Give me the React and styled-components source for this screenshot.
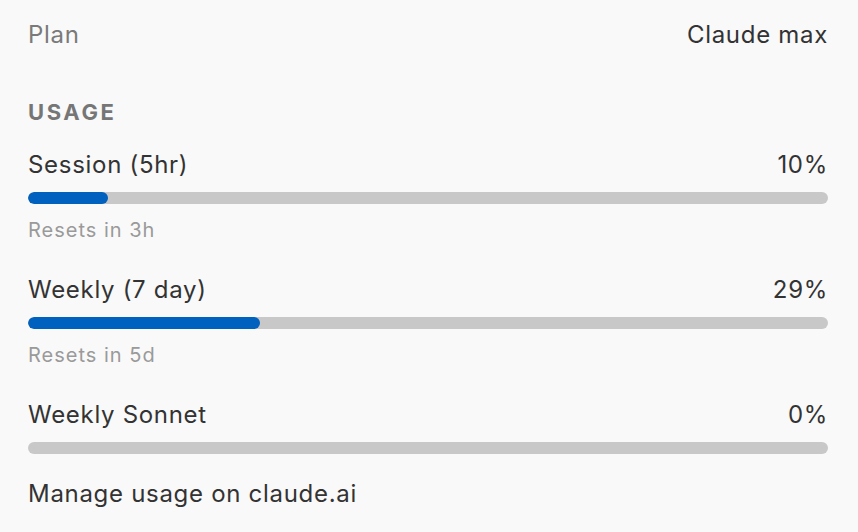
import React from "react";
import styled, { createGlobalStyle } from "styled-components";

const Global = createGlobalStyle`
  html, body { margin: 0; padding: 0; background: #f9f9f9; }
  body { font-family: Inter, "Noto Sans", sans-serif; -webkit-font-smoothing: antialiased; }
`;

const Panel = styled.div`
  width: 858px;
  height: 532px;
  box-sizing: border-box;
  padding: 20px 30px 0 28px;
  background: #f9f9f9;
  display: flex;
  flex-direction: column;
`;

const Row = styled.div`
  display: flex;
  justify-content: space-between;
  align-items: center;
  height: 30px;
  font-size: 24px;
  line-height: 30px;
  letter-spacing: 0.7px;
  color: #333333;
`;

const Muted = styled.span`
  color: #7a7a7a;
`;

const Section = styled.div`
  margin-top: 47px;
  font-size: 22px;
  line-height: 30px;
  font-weight: 700;
  letter-spacing: 2.6px;
  color: #767676;
`;

const Metrics = styled.div`
  display: flex;
  flex-direction: column;
  gap: 32px;
  margin-top: 23px;
`;

const Metric = styled.div`
  display: flex;
  flex-direction: column;
`;

const Track = styled.div`
  margin-top: 12px;
  height: 12px;
  border-radius: 6px;
  background: #c8c8c8;
  overflow: hidden;
`;

const Fill = styled.div`
  height: 100%;
  border-radius: 6px;
  background: #0061bf;
`;

const Reset = styled.div`
  margin-top: 13px;
  font-size: 20px;
  line-height: 26px;
  letter-spacing: 1px;
  color: #9a9a9a;
`;

const Link = styled.div`
  margin-top: 25px;
  font-size: 24px;
  line-height: 30px;
  letter-spacing: 0.7px;
  color: #333333;
`;

const data = [
  { label: "Session (5hr)", pct: 10, reset: "Resets in 3h" },
  { label: "Weekly (7 day)", pct: 29, reset: "Resets in 5d" },
  { label: "Weekly Sonnet", pct: 0 },
];

export default function App() {
  return (
    <>
      <Global />
      <Panel>
        <Row>
          <Muted>Plan</Muted>
          <span>Claude max</span>
        </Row>
        <Section>USAGE</Section>
        <Metrics>
          {data.map((d) => (
            <Metric key={d.label}>
              <Row>
                <span>{d.label}</span>
                <span>{d.pct}%</span>
              </Row>
              <Track>
                {d.pct > 0 && <Fill style={{ width: `${d.pct}%` }} />}
              </Track>
              {d.reset && <Reset>{d.reset}</Reset>}
            </Metric>
          ))}
        </Metrics>
        <Link>Manage usage on claude.ai</Link>
      </Panel>
    </>
  );
}
